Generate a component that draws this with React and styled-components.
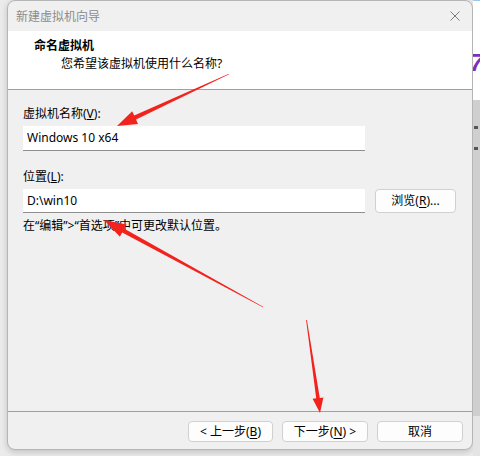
import styled, { createGlobalStyle } from "styled-components";

const GlobalStyle = createGlobalStyle`
    html, body {
        margin: 0;
        padding: 0;
        background: #ebebeb;
    }
    body {
        font-family: "Noto Sans", "Noto Sans CJK SC", sans-serif;
        font-size: 12px;
        color: #000;
    }
`;

const Desktop = styled.div`
    position: relative;
    width: 480px;
    height: 456px;
    display: flex;
    overflow: hidden;
    background: #ebebeb;
`;

const LeftGutter = styled.div`
    width: 7px;
    flex-shrink: 0;
`;

const Behind = styled.div`
    width: 7px;
    flex-shrink: 0;
    display: flex;
    flex-direction: column;
    overflow: hidden;
    .top {
        height: 100px;
        background: #fff;
        border-top: 1px solid #9ec6e8;
        box-sizing: border-box;
        padding-top: 50px;
    }
    .seven {
        display: block;
        width: 7px;
        overflow: hidden;
        font-family: "Liberation Sans", sans-serif;
        font-weight: bold;
        font-style: italic;
        font-size: 24px;
        line-height: 24px;
        color: #7a2fc0;
        text-indent: -3px;
    }
    .gray {
        flex: 1;
        background: #cfcfcf;
        padding-top: 26px;
    }
    .mark {
        display: block;
        width: 4px;
        height: 3px;
        background: #555;
        margin: 0 0 18px 1px;
    }
    .rest {
        height: 40px;
        background: #e4e4e4;
    }
`;

const Window = styled.div`
    width: 466px;
    height: 450px;
    box-sizing: border-box;
    flex-shrink: 0;
    display: flex;
    flex-direction: column;
    background: #f0f0f0;
    border: 1px solid #b5b5b5;
    border-radius: 8px;
    box-shadow: 0 2px 6px rgba(0, 0, 0, 0.18);
    overflow: hidden;
`;

const TitleBar = styled.div`
    height: 30px;
    display: flex;
    align-items: center;
    justify-content: space-between;
    padding: 0 12px 0 8px;
    color: #8c8c8c;
    font-size: 12px;
    .closeX {
        width: 10px;
        height: 10px;
        display: block;
    }
`;

const Header = styled.div`
    height: 59px;
    box-sizing: border-box;
    background: #fff;
    border-bottom: 1px solid #a0a0a0;
    padding: 7px 0 0 26px;
    h3 {
        margin: 0;
        font-size: 12px;
        line-height: 16px;
        font-weight: bold;
    }
    p {
        margin: 2px 0 0 27px;
        line-height: 16px;
    }
`;

const Body = styled.div`
    flex: 1;
    padding: 16px 15px 0;
`;

const Label = styled.div`
    line-height: 16px;
    margin-top: ${({ $top }) => $top || 0}px;
`;

const FieldRow = styled.div`
    display: flex;
    align-items: center;
    gap: 10px;
    margin-top: 4px;
`;

const Input = styled.div`
    width: 342px;
    height: ${({ $h }) => $h || 25}px;
    box-sizing: border-box;
    background: #fff;
    border-bottom: 1px solid #8e8e8e;
    padding: 0 4px;
    display: flex;
    align-items: center;
    line-height: 16px;
`;

const Button = styled.div`
    width: ${({ $w }) => $w}px;
    height: ${({ $h }) => $h}px;
    box-sizing: border-box;
    display: flex;
    align-items: center;
    justify-content: center;
    background: #fdfdfd;
    border: 1px solid #d0d0d0;
    border-radius: 4px;
    line-height: 16px;
    u {
        text-decoration-thickness: 1px;
        text-underline-offset: 2px;
    }
`;

const Hint = styled.div`
    margin-top: 5px;
    line-height: 16px;
`;

const Footer = styled.div`
    height: 38px;
    box-sizing: border-box;
    border-top: 1px solid #a0a0a0;
    display: flex;
    justify-content: flex-end;
    gap: 9px;
    padding: 9px 9px 0 0;
`;

const Annotations = styled.svg`
    position: absolute;
    left: 0;
    top: 0;
    pointer-events: none;
`;

function App() {
    return (
        <>
            <GlobalStyle />
            <Desktop>
                <LeftGutter />
                <Window>
                    <TitleBar>
                        <span>新建虚拟机向导</span>
                        <svg className="closeX" viewBox="0 0 10 10">
                            <path d="M0.5 0.5 L9.5 9.5 M9.5 0.5 L0.5 9.5" stroke="#7a7a7a" strokeWidth="1" fill="none" />
                        </svg>
                    </TitleBar>
                    <Header>
                        <h3>命名虚拟机</h3>
                        <p>您希望该虚拟机使用什么名称?</p>
                    </Header>
                    <Body>
                        <Label>
                            虚拟机名称(<u>V</u>):
                        </Label>
                        <FieldRow>
                            <Input>Windows 10 x64</Input>
                        </FieldRow>
                        <Label $top={18}>
                            位置(<u>L</u>):
                        </Label>
                        <FieldRow>
                            <Input $h={24}>D:\win10</Input>
                            <Button $w={81} $h={24}>
                                浏览(<u>R</u>)...
                            </Button>
                        </FieldRow>
                        <Hint>在“编辑”&gt;“首选项”中可更改默认位置。</Hint>
                    </Body>
                    <Footer>
                        <Button $w={85} $h={21}>
                            &lt; 上一步(<u>B</u>)
                        </Button>
                        <Button $w={86} $h={21}>
                            下一步(<u>N</u>) &gt;
                        </Button>
                        <Button $w={86} $h={21}>
                            取消
                        </Button>
                    </Footer>
                </Window>
                <Behind>
                    <div className="top">
                        <span className="seven">7</span>
                    </div>
                    <div className="gray">
                        <span className="mark" />
                        <span className="mark" />
                    </div>
                    <div className="rest" />
                </Behind>
                <Annotations width="480" height="456" viewBox="0 0 480 456">
                    <g fill="#f2231d">
                        <polygon points="229.1,74.3 136.0,119.6 138.0,124.0 117,126 132.2,111.2 134.2,115.6 228.9,73.7" />
                        <polygon points="263.1,306.7 124.4,228.7 126.7,224.5 104,220 119.9,236.7 122.2,232.5 262.9,307.3" />
                        <polygon points="306.9,319.9 319.8,397.9 323.4,397.4 320,413 312.6,398.8 316.2,398.3 306.1,320.1" />
                    </g>
                </Annotations>
            </Desktop>
        </>
    );
}

export default App;
